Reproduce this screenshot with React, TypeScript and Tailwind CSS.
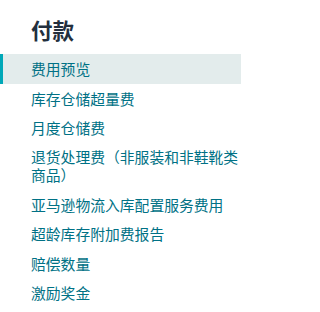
import React from "react";

const items = [
  "库存仓储超量费",
  "月度仓储费",
  "退货处理费（非服装和非鞋靴类商品）",
  "亚马逊物流入库配置服务费用",
  "超龄库存附加费报告",
  "赔偿数量",
  "激励奖金",
];

export default function App() {
  return (
    <div
      className="w-[275px] h-[312px] bg-white overflow-hidden"
      style={{ fontFamily: '"Noto Sans CJK SC", "Noto Sans", sans-serif' }}
    >
      <div className="w-[241px] pt-[16px]">
        <div className="pl-[31px] text-[21.5px] leading-[28px] font-bold text-[#232f3e] mb-[10px]">
          付款
        </div>
        <ul>
          <li className="border-l-[3px] border-[#00a8b8] bg-[#e3ecec] pl-[28px] py-[6px] text-[14.8px] leading-[18px] text-[#007185]">
            费用预览
          </li>
          {items.map((t) => (
            <li
              key={t}
              className="pl-[31px] pr-[2px] py-[5.7px] text-[14.8px] leading-[18px] text-[#007185]"
            >
              {t}
            </li>
          ))}
        </ul>
      </div>
    </div>
  );
}
